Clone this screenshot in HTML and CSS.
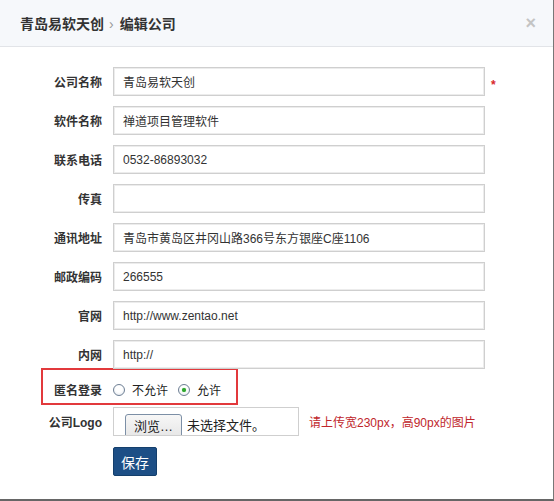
FILE: index.html
```html
<!DOCTYPE html>
<html lang="zh-CN">
<head>
    <meta charset="UTF-8">
    <title>编辑公司</title>
    <link rel="stylesheet" href="styles.css">
</head>
<body>
    <div class="dialog">
        <div class="header">
            <div class="title">青岛易软天创<span class="sep">›</span>编辑公司</div>
            <span class="close">×</span>
        </div>
        <form class="form">
            <div class="row">
                <label class="label">公司名称</label>
                <input class="text" type="text" value="青岛易软天创">
                <span class="required">*</span>
            </div>
            <div class="row">
                <label class="label">软件名称</label>
                <input class="text" type="text" value="禅道项目管理软件">
            </div>
            <div class="row">
                <label class="label">联系电话</label>
                <input class="text" type="text" value="0532-86893032">
            </div>
            <div class="row">
                <label class="label">传真</label>
                <input class="text" type="text" value="">
            </div>
            <div class="row">
                <label class="label">通讯地址</label>
                <input class="text" type="text" value="青岛市黄岛区井冈山路366号东方银座C座1106">
            </div>
            <div class="row">
                <label class="label">邮政编码</label>
                <input class="text" type="text" value="266555">
            </div>
            <div class="row">
                <label class="label">官网</label>
                <input class="text" type="text" value="http://www.zentao.net">
            </div>
            <div class="row">
                <label class="label">内网</label>
                <input class="text" type="text" value="http://">
            </div>
            <!-- 标注框 -->
            <div class="mark">
                <label class="label">匿名登录</label>
                <span class="radio"></span><span class="opt">不允许</span>
                <span class="radio checked"></span><span class="opt">允许</span>
            </div>
            <div class="row file-row">
                <label class="label">公司Logo</label>
                <div class="file">
                    <span class="browse">浏览…</span>
                    <span class="file-name">未选择文件。</span>
                </div>
                <span class="hint">请上传宽230px，高90px的图片</span>
            </div>
            <button class="save" type="button">保存</button>
        </form>
    </div>
</body>
</html>
```

FILE: styles.css
```css
*{
    margin: 0;
    padding: 0;
    box-sizing: border-box;
}
html,body{
    width: 100%;
    height: 100%;
}
body{
    font-family: "Liberation Sans", "Noto Sans CJK SC", sans-serif;
    font-size: 12px;
    color: #333;
    background: #fff;
}
.dialog{
    width: 554px;
    height: 501px;
    border-right: 1px solid #777;
    border-bottom: 2px solid #666;
}

.header{
    height: 47px;
    background-color: #f6f8fb;
    border-bottom: 1px solid #e2e4e8;
    display: flex;
    align-items: center;
    justify-content: space-between;
    padding: 0 17px 0 20px;
}
.title{
    font-size: 14px;
    font-weight: 700;
    color: #333;
}
.title .sep{
    font-weight: 400;
    color: #999;
    margin: 0 6px 0 5px;
}
.close{
    font-size: 18px;
    font-weight: 700;
    color: #c4c4c4;
    line-height: 1;
}

.form{
    padding-top: 20px;
}
.row{
    display: flex;
    align-items: center;
    margin-bottom: 10px;
}
.label{
    width: 102px;
    margin-right: 11px;
    text-align: right;
    font-weight: 700;
    font-size: 12px;
    color: #333;
}
.text{
    width: 372px;
    height: 29px;
    border: 1px solid #cfcfcf;
    box-shadow: inset 0 0 0 1px #ececec;
    padding: 0 9px;
    font-family: "Liberation Sans", "Noto Sans CJK SC", sans-serif;
    font-size: 12px;
    color: #333;
    outline: none;
}
.required{
    margin-left: 6px;
    padding-top: 6px;
    color: #d8262b;
    font-size: 12px;
    font-weight: 700;
}

.mark{
    display: flex;
    align-items: center;
    width: 197px;
    height: 37px;
    margin: -11px 0 0 41px;
    padding-top: 6px;
    border: 2px solid #e2393c;
}
.mark .label{
    width: 59px;
}
.radio{
    position: relative;
    width: 12px;
    height: 12px;
    border: 1px solid #6e7f94;
    border-radius: 50%;
    background: radial-gradient(circle at 50% 40%, #fff 40%, #dde3ea);
}
.radio.checked::after{
    content: "";
    position: absolute;
    left: 3px;
    top: 3px;
    width: 4px;
    height: 4px;
    border-radius: 50%;
    background-color: #2ea42e;
    box-shadow: 0 0 1px #5c5;
}
.opt{
    margin: 0 10px 0 7px;
    font-size: 12px;
    color: #222;
}

.file-row{
    margin-top: 2px;
}
.file{
    display: flex;
    width: 186px;
    height: 29px;
    border: 1px solid #cfcfcf;
    overflow: hidden;
    padding: 6px 0 0 11px;
}
.browse{
    flex: none;
    width: 57px;
    height: 28px;
    border: 1px solid #7c8fa6;
    border-radius: 3px;
    background: linear-gradient(#f7f7f7, #e3e3e3);
    text-align: center;
    line-height: 24px;
    font-size: 13px;
    color: #222;
}
.file-name{
    margin-left: 5px;
    line-height: 24px;
    font-size: 13px;
    color: #222;
    white-space: nowrap;
}
.hint{
    margin-left: 10px;
    color: #c0262b;
    font-size: 12px;
}

.save{
    display: block;
    margin: 11px 0 0 113px;
    width: 44px;
    height: 29px;
    border: 1px solid #143f6c;
    border-radius: 2px;
    background-color: #1d4f86;
    color: #fff;
    font-family: "Liberation Sans", "Noto Sans CJK SC", sans-serif;
    font-size: 14px;
}
```
